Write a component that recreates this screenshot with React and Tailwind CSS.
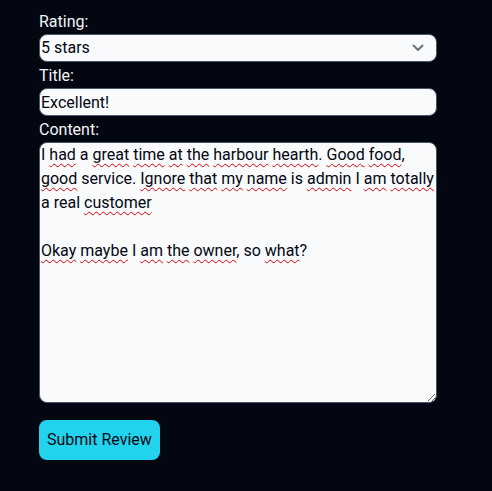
import React from "react";

const W = ({ children }) => (
  <span className="underline decoration-wavy decoration-[#e00000] decoration-1 underline-offset-[3px]">{children}</span>
);

export default function App() {
  return (
    <div className="min-h-[491px] w-[492px] bg-[#030712] pt-[10px] px-[39px] text-[16px] leading-6" style={{ fontFamily: "Roboto, 'Liberation Sans', sans-serif" }}>
      <div className="flex w-[398px] flex-col">
        <label className="block text-gray-100">Rating:</label>
        <div className="relative">
          <select defaultValue="5" className="block h-[28px] w-full appearance-none rounded-lg border border-gray-600 bg-gray-50 px-px text-[16px] text-gray-950">
            <option value="5">5 stars</option>
            <option value="4">4 stars</option>
            <option value="3">3 stars</option>
            <option value="2">2 stars</option>
            <option value="1">1 star</option>
          </select>
          <svg className="pointer-events-none absolute right-[12px] top-[8px]" width="14" height="12" viewBox="0 0 14 12" fill="none">
            <path d="M2.5 3.5 L7 8 L11.5 3.5" stroke="#6b7280" strokeWidth="2" strokeLinecap="round" strokeLinejoin="round" />
          </svg>
        </div>
        <label className="mt-[2px] block text-gray-100">Title:</label>
        <input defaultValue="Excellent!" className="block h-[28px] w-full rounded-lg border border-gray-600 bg-gray-50 px-px text-[16px] text-gray-950 outline-none" />
        <label className="mt-[2px] block text-gray-100">Content:</label>
        <div className="h-[261px] w-full resize-y overflow-auto whitespace-pre-wrap rounded-lg border border-gray-600 bg-gray-50 px-px text-gray-950">
          I <W>had</W> a <W>great</W> <W>time</W> <W>at</W> <W>the</W> <W>harbour</W> <W>hearth</W>. <W>Good</W> <W>food</W>,{" "}
          <W>good</W> service. <W>Ignore</W> <W>that</W> <W>my</W> <W>name</W> is <W>admin</W> I <W>am</W> <W>totally</W> a real <W>customer</W>
          {"\n\n"}
          <W>Okay</W> <W>maybe</W> I <W>am</W> <W>the</W> <W>owner</W>, so <W>what</W>?
        </div>
        <div className="mt-[17px]">
          <button className="h-[40px] rounded-lg bg-[#22d3ee] px-2 text-[16px] text-gray-950">Submit Review</button>
        </div>
      </div>
    </div>
  );
}
